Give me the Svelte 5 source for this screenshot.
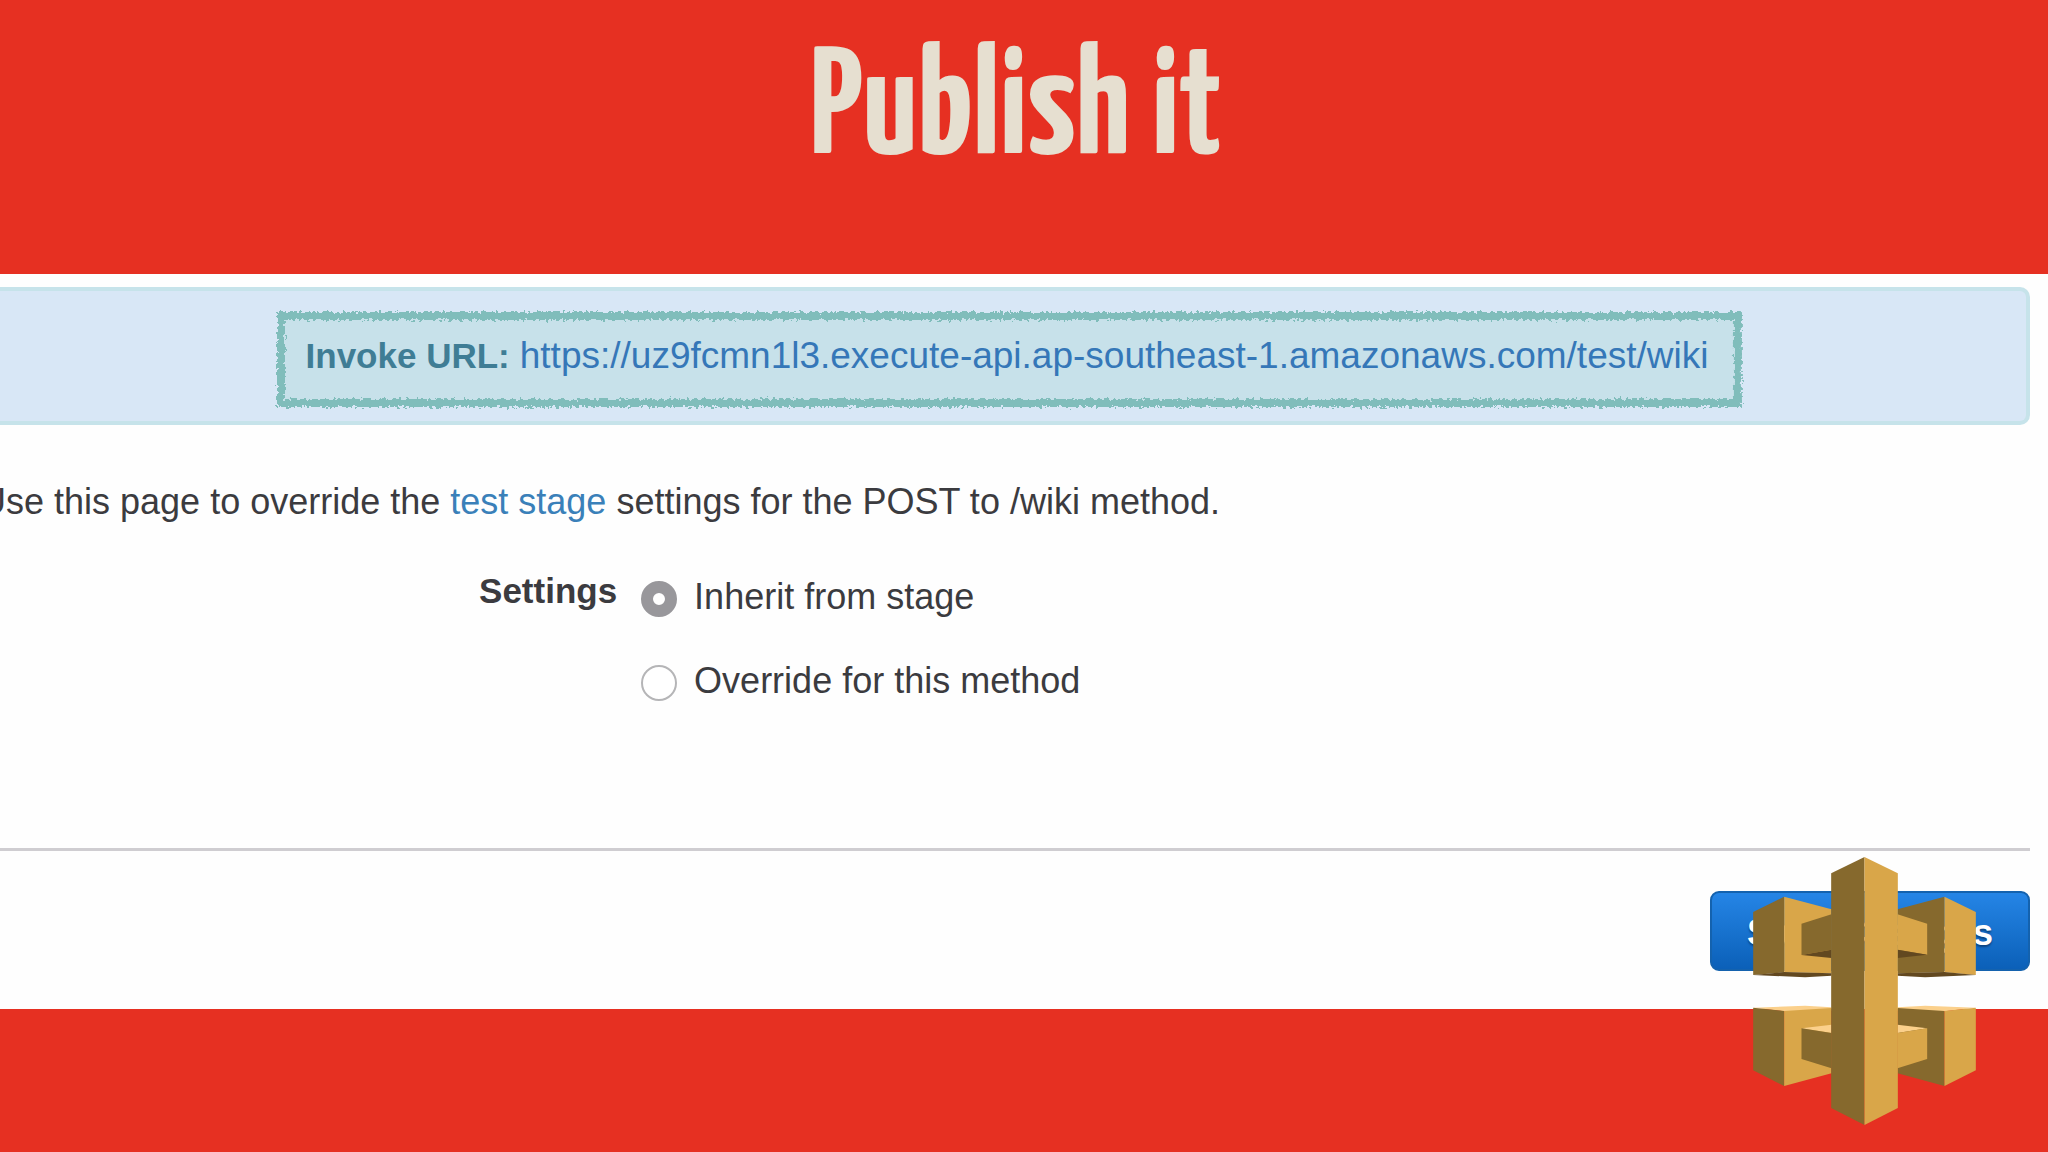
<script lang="ts">
	let selected = $state('inherit');

	const options = [
		{ value: 'inherit', label: 'Inherit from stage' },
		{ value: 'override', label: 'Override for this method' }
	];

	const invokeUrl = 'https://uz9fcmn1l3.execute-api.ap-southeast-1.amazonaws.com/test/wiki';
</script>

<main class="slide">
	<header>
		<h1>Publish it</h1>
	</header>

	<section class="panel">
		<div class="alert">
			<div class="highlight">
				<svg class="crayon" aria-hidden="true">
					<filter id="rough" x="-2%" y="-10%" width="104%" height="120%">
						<feTurbulence type="fractalNoise" baseFrequency="0.3" numOctaves="2" seed="4" />
						<feDisplacementMap in="SourceGraphic" scale="8" xChannelSelector="R" yChannelSelector="G" />
					</filter>
					<rect class="fill" />
					<g filter="url(#rough)">
						<rect class="stroke" />
					</g>
				</svg>
				<strong>Invoke URL:</strong>
				<a href={invokeUrl}>{invokeUrl}</a>
			</div>
		</div>

		<p class="intro">
			Use this page to override the <a href="#stage">test stage</a> settings for the POST to /wiki method.
		</p>

		<form onsubmit={(e) => e.preventDefault()}>
			<div class="settings" role="radiogroup" aria-labelledby="settings-label">
				<span class="settings-label" id="settings-label">Settings</span>
				<div class="options">
					{#each options as option}
						<label>
							<input type="radio" name="settings" value={option.value} bind:group={selected} />
							{option.label}
						</label>
					{/each}
				</div>
			</div>

			<hr />

			<div class="actions">
				<button type="submit">Save Changes</button>
			</div>
		</form>
	</section>

	<svg class="gateway" viewBox="189 81 668 804" aria-hidden="true">
		<!-- upper arms -->
		<path fill="#86692d" d="M189 246 282 200V427L189 435Z" />
		<path fill="#d9a649" d="M282 200 424 238V430L282 427Z" />
		<path fill="#86692d" d="M622 238 763 200V427L622 430Z" />
		<path fill="#d9a649" d="M763 200 857 246V435L763 427Z" />
		<path fill="#624820" d="M189 435 282 426 424 430V437L345 442ZM857 435 763 426 622 430V437L705 442Z" />
		<path fill="#86692d" d="M334 281 424 253V359L334 375Z" />
		<path fill="#d9a649" d="M622 253 711 281V374L622 359Z" />
		<path fill="#624820" d="M334 375 424 359V384ZM711 374 622 359V384Z" />
		<!-- lower arms -->
		<path fill="#fbd08b" d="M189 533 345 527 424 532V542L282 544ZM857 533 705 527 622 532V542L763 544Z" />
		<path fill="#86692d" d="M189 533 282 543V768L189 721Z" />
		<path fill="#d9a649" d="M282 543 424 534V730L282 768Z" />
		<path fill="#86692d" d="M622 534 763 543V768L622 730Z" />
		<path fill="#d9a649" d="M763 543 857 533V721L763 768Z" />
		<path fill="#fbd08b" d="M334 595 424 584V609ZM711 595 622 584V609Z" />
		<path fill="#86692d" d="M334 595 424 609V715L334 687Z" />
		<path fill="#d9a649" d="M622 609 711 595V687L622 715Z" />
		<!-- centre post -->
		<path fill="#86692d" d="M423 130 523 81V885L423 834Z" />
		<path fill="#d9a649" d="M523 81 623 130V834L523 885Z" />
	</svg>
</main>

<style>
	:global(body) {
		margin: 0;
		background: #e63022;
	}

	.slide {
		position: relative;
		min-height: 100vh;
		overflow: hidden;
		background: #e63022;
		color: #3b3b3f;
		font-family: 'Liberation Sans', Arial, sans-serif;
		font-size: 36px;
		line-height: 40px;
	}

	header {
		padding: 36px 0 86px;
	}

	h1 {
		margin: 0;
		padding-right: 16px;
		color: #e6dfd0;
		font-family: 'Yanone Kaffeesatz', 'Open Sans Condensed', 'Roboto Condensed', sans-serif;
		font-size: 152px;
		font-weight: 700;
		line-height: 152px;
		text-align: center;
	}

	.panel {
		padding: 13px 18px 38px 0;
		background: #fefefe;
	}

	.alert {
		display: flex;
		justify-content: center;
		padding: 20px 8px 13px 0;
		background: #d8e7f6;
		border: 4px solid #c6e3ea;
		border-left: 0;
		border-radius: 0 10px 10px 0;
	}

	.highlight {
		position: relative;
		display: flex;
		gap: 10px;
		padding: 25px 34px 32px 30px;
	}

	.crayon {
		position: absolute;
		inset: 0;
		width: 100%;
		height: 100%;
		overflow: visible;
	}

	.crayon rect {
		x: 5px;
		y: 5px;
		width: calc(100% - 10px);
		height: calc(100% - 10px);
	}

	.fill {
		fill: #c7e1ea;
	}

	.stroke {
		fill: none;
		stroke: #80bdbb;
		stroke-width: 8px;
	}

	strong {
		position: relative;
		color: #3f7d95;
		font-size: 35px;
	}

	a {
		color: #3a80b9;
		text-decoration: none;
	}

	.highlight a {
		position: relative;
		color: #3577b8;
		font-size: 37px;
	}

	.intro {
		margin: 57px 0 0 -20px;
		white-space: nowrap;
	}

	.settings {
		display: flex;
		gap: 24px;
		padding-top: 49px;
	}

	.settings-label {
		width: 30.4%;
		font-size: 35px;
		font-weight: 700;
		text-align: right;
	}

	.options {
		display: flex;
		flex-direction: column;
		gap: 44px;
		padding-top: 6px;
	}

	label {
		display: flex;
		align-items: center;
		gap: 17px;
	}

	input {
		width: 36px;
		height: 36px;
		margin: 4px 0 0;
		appearance: none;
		background: #fff;
		border: 2px solid #b5b5b7;
		border-radius: 50%;
	}

	input:checked {
		border: 12px solid #98979b;
	}

	hr {
		height: 3px;
		margin: 147px 0 0;
		background: #cfcdd1;
		border: 0;
	}

	.actions {
		display: flex;
		justify-content: flex-end;
		padding-top: 40px;
	}

	button {
		padding: 20px 35px 16px;
		background: linear-gradient(#2585e6, #0b60b8);
		border: 2px solid #1462ae;
		border-radius: 9px;
		color: #fff;
		font: inherit;
		font-weight: 700;
		text-shadow: 0 2px 2px #0c4480;
	}

	.gateway {
		position: absolute;
		right: 72px;
		bottom: 27px;
		width: 223px;
		height: 268px;
	}
</style>
